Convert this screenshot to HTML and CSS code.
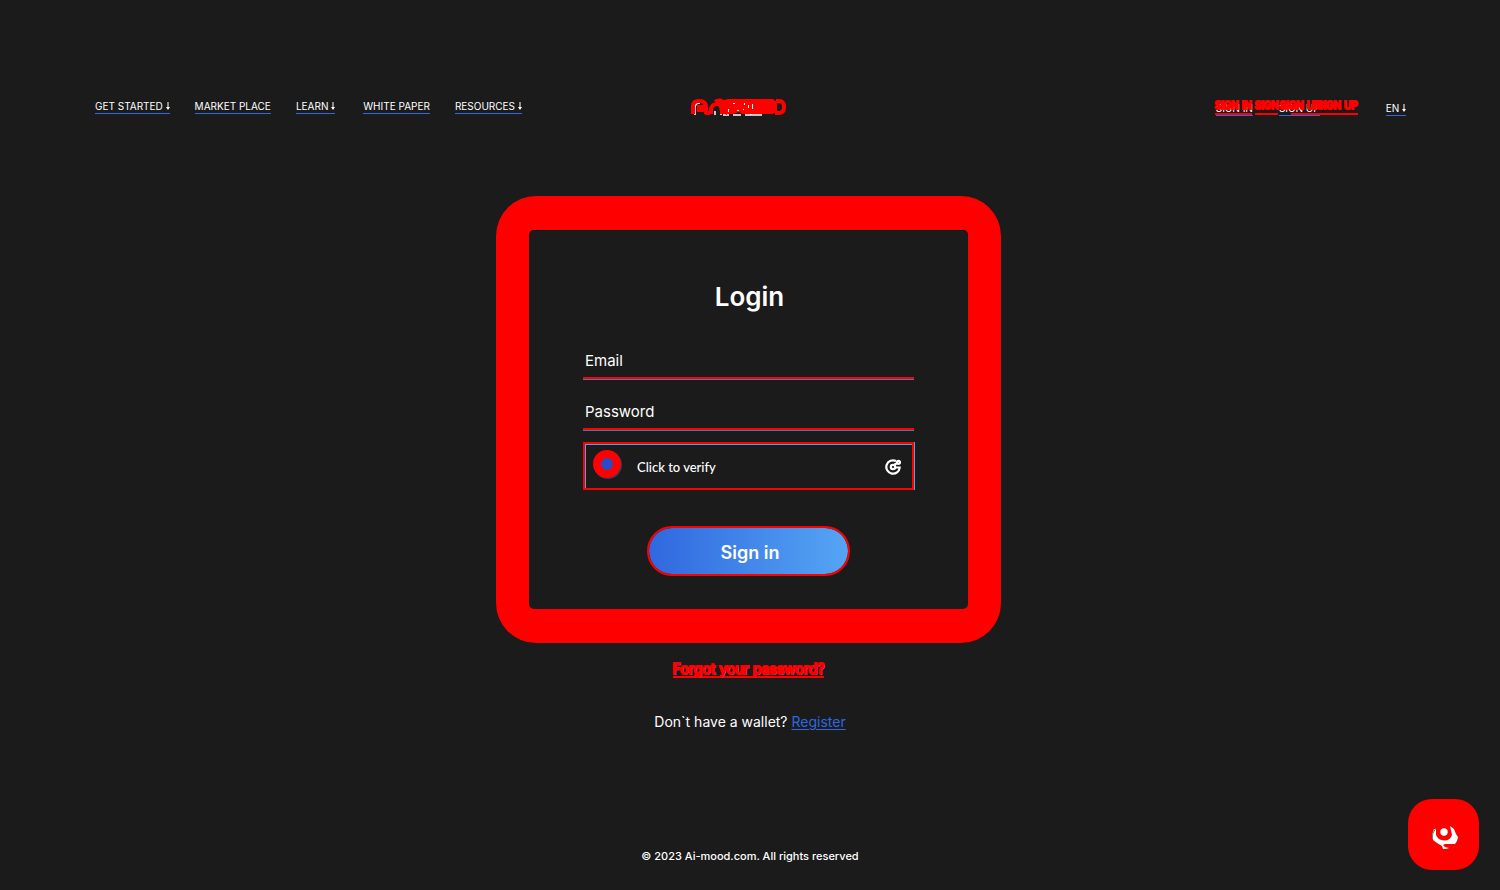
FILE: index.html
```html
<!DOCTYPE html>
<html lang="en">
<head>
<meta charset="utf-8">
<title>Ai-mood – Login</title>
<link rel="stylesheet" href="styles.css">
</head>
<body>
<header class="header">
  <nav class="nav">
    <a class="nav-link" href="#">GET STARTED <svg class="arrow" viewBox="0 0 4 8"><path d="M1.500 0h1v5H4L2 8 0 5h1.500z"/></svg></a>
    <a class="nav-link" href="#">MARKET PLACE</a>
    <a class="nav-link learn" href="#">LEARN <svg class="arrow" viewBox="0 0 4 8"><path d="M1.500 0h1v5H4L2 8 0 5h1.500z"/></svg></a>
    <a class="nav-link" href="#">WHITE PAPER</a>
    <a class="nav-link" href="#">RESOURCES <svg class="arrow" viewBox="0 0 4 8"><path d="M1.500 0h1v5H4L2 8 0 5h1.500z"/></svg></a>
  </nav>
  <a class="logo" href="#" aria-label="Ai-mood">
    <svg width="96" height="18" viewBox="0 0 96 18">
      <g fill="none" stroke="#fff" stroke-width="1.5">
        <path d="M4 17V10q0-5 5-5M24 17v-4M30 17V9M32 17h6M42 17h8M54 17h17M60 8v9"/>
      </g>
      <g fill="none" stroke="#f00" stroke-width="4">
        <path d="M2 16V8q0-5 6-5q7 0 7 6v7M6 9h5v3H6M14 15h5M20 16V11q1-5 6-5q5 0 5 10M24 4q6-4 9 2M34 16l7-12M40 15l4-5"/>
        <path d="M85 3h3q5 0 5 6t-5 6h-4"/>
      </g>
      <path fill="#f00" d="M29 3l8-2h45l4 3v10l-5 2H51l-3-2-6 2h-7l-4-5z"/>
      <path fill="#fff" d="M42 5h2v1h-2zM53 5h1v2h-1zM37 11h1v3h-1zM57 7h1v3h-1zM61 6h1v5h-1zM46 12h2v1h-2zM52 11h1v1h-1z"/>
    </svg>
  </a>
  <div class="account">
    <div class="auth">
      <a class="nav-link" href="#">SIGN IN</a>
      <a class="nav-link" href="#">SIGN UP</a>
      <span class="mark mark-a" aria-hidden="true">SIGN IN</span>
      <span class="mark mark-b" aria-hidden="true">SIGN</span>
      <span class="mark mark-c" aria-hidden="true">SIGN UP</span>
      <span class="mark mark-d" aria-hidden="true">SIGN UP</span>
    </div>
    <a class="nav-link" href="#">EN <svg class="arrow" viewBox="0 0 4 8"><path d="M1.500 0h1v5H4L2 8 0 5h1.500z"/></svg></a>
  </div>
</header>
<main class="main">
  <div class="frame">
    <form class="card">
      <h1 class="title">Login</h1>
      <input class="field" type="email" placeholder="Email" aria-label="Email">
      <input class="field" type="password" placeholder="Password" aria-label="Password">
      <button class="verify" type="button">
        <span class="dot"></span>
        <span class="verify-text">Click to verify</span>
        <svg class="verify-icon" viewBox="0 0 16 16" fill="none" stroke="#fff" stroke-width="2.2">
          <path d="M11 2A6.700 6.700 0 1 0 14.700 8.500H10"/><circle cx="8" cy="8" r="2.200"/><circle cx="13.500" cy="3.300" r="1.500"/><path d="M9.500 5.500l2.500-1.300"/>
        </svg>
      </button>
      <button class="submit" type="submit">Sign in</button>
    </form>
  </div>
  <a class="forgot" href="#">Forgot your password?</a>
  <p class="register">Don`t have a wallet? <a class="register-link" href="#">Register</a></p>
</main>
<footer class="footer">© 2023 Ai-mood.com. All rights reserved</footer>
<button class="chat" type="button" aria-label="Open chat">
  <svg width="26" height="24" viewBox="0 0 26 24" fill="#fff">
    <circle cx="12" cy="6" r="3.700"/>
    <path d="M4 3v6q2 5 8 5.500q7 0 8-6L18 0l4 3 2 5 2 3-1 4-2 3H13l-2 1 2 2 4 1-3 1h-3l-1-3-5-3-4-3-1-5 2-6z"/>
    <path d="M4 2L1 7 0 13" fill="none" stroke="#22a04a"/>
  </svg>
</button>
</body>
</html>
```
FILE: styles.css
```css
* { box-sizing: border-box; }
body {
  margin: 0;
  min-height: 100vh;
  display: flex;
  flex-direction: column;
  background: #1b1b1b;
  color: #fff;
  font-family: Inter, "Liberation Sans", sans-serif;
}
.header {
  display: grid;
  grid-template-columns: 1fr auto 1fr;
  align-items: start;
  padding: 98px 94px 0 95px;
}
.nav { display: flex; gap: 25px; padding-top: 2px; }
.nav-link {
  color: #fff;
  font-size: 10px;
  line-height: 13px;
  text-decoration: none;
  border-bottom: 1px solid #2f68e0;
  white-space: nowrap;
}
.learn { margin-right: 3px; }
.arrow {
  width: 4px;
  height: 8px;
  vertical-align: 0;
  fill: #fff;
}
.logo { display: block; height: 18px; margin-right: 24px; }
.logo svg { display: block; }
.account { display: flex; justify-content: flex-end; padding-top: 4px; }
.auth { position: relative; display: flex; gap: 26px; margin-right: 66px; }
.mark {
  position: absolute;
  top: -3px;
  color: #f00;
  font-size: 10px;
  line-height: 13px;
  height: 16px;
  white-space: nowrap;
  -webkit-text-stroke: 2px #f00;
  border-bottom: 2px solid #f00;
}
.mark-a { left: -1px; }
.mark-b { left: 39px; width: 23px; }
.mark-c { left: 64px; border-bottom: 0; }
.mark-d { left: 75px; width: 67px; text-align: right; }
.main { display: flex; flex-direction: column; align-items: center; padding-top: 80px; }
.frame {
  width: 505px;
  max-width: 100%;
  margin-right: 3px;
  padding: 34px 33px;
  background: #f00;
  border-radius: 40px;
}
.card {
  display: flex;
  flex-direction: column;
  align-items: stretch;
  padding: 50px 54px 33px;
  background: #1b1b1b;
  border-top: 1px solid #000;
  border-radius: 5px;
}
.title {
  margin: 0 0 30px;
  padding-left: 2px;
  text-align: center;
  font-size: 26px;
  line-height: 32px;
  font-weight: 600;
}
.field {
  width: 100%;
  height: 36px;
  margin-bottom: 15px;
  padding: 0 2px;
  border: 0;
  border-bottom: 2px solid #f00;
  box-shadow: 0 1px 0 #3b7db5;
  background: #1b1b1b;
  color: #fff;
  font: 15px/20px Inter, sans-serif;
}
.field::placeholder { color: #fff; opacity: 1; }
.verify {
  display: flex;
  align-items: center;
  height: 48px;
  margin-top: -3px;
  padding: 0 11px 0 8px;
  border: 2px solid #f00;
  background: #1b1b1b;
  box-shadow: inset 1px 1px 0 #4aa5ef, 1px 0 0 #4aa5ef;
  color: #fff;
}
.dot {
  width: 28px;
  height: 28px;
  margin-bottom: 5px;
  border: 8px solid #f00;
  border-radius: 50%;
  background: #294bc7;
  box-shadow: 1px 1px 0 #243f63;
}
.verify-text { margin-left: 16px; padding-top: 2px; font: 500 13px/18px Lato, sans-serif; }
.verify-icon { width: 16px; height: 16px; margin-left: auto; margin-top: 2px; }
.submit {
  align-self: center;
  width: 203px;
  height: 50px;
  margin-top: 36px;
  padding: 4px 0 0 3px;
  border: 2px solid #f00;
  border-radius: 25px;
  background: linear-gradient(90deg, #3068df, #55a5f4) padding-box;
  color: #fff;
  font: 600 18px/24px Inter, sans-serif;
}
.forgot {
  margin: 18px 3px 0 0;
  color: #f00;
  font-size: 14px;
  line-height: 15px;
  text-decoration: none;
  border-bottom: 2px solid #f00;
  -webkit-text-stroke: 2px #f00;
  text-shadow: 1px 1px 0 #2f68e0;
}
.register { margin: 34px 0 0; font-size: 14px; line-height: 20px; }
.register-link { color: #2f68e0; text-underline-offset: 2px; }
.footer {
  margin-top: auto;
  padding-bottom: 26px;
  text-align: center;
  font: 500 11px/16px Inter, sans-serif;
}
.chat {
  position: fixed;
  right: 21px;
  bottom: 20px;
  width: 71px;
  height: 71px;
  padding: 6px 0 0 2px;
  display: grid;
  place-items: center;
  border: 0;
  border-radius: 24px;
  background: #f00;
}
```
